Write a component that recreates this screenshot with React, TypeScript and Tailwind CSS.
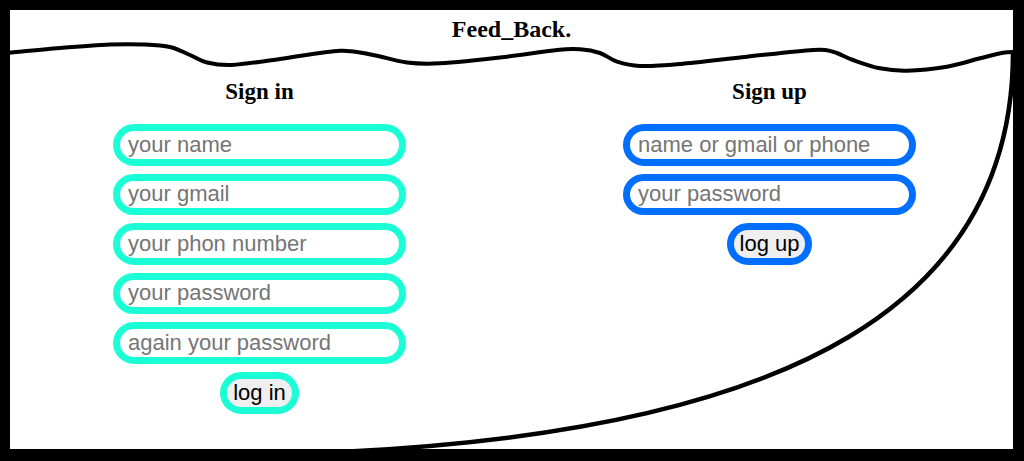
import React from 'react'

// ─── Decorative lines (wave under the title, big sweep on the right) ─────────

type Pt = [number, number]

const wavePts: Pt[] = [
  [10, 52.7], [60, 48], [110, 44.5], [145, 44.5], [170, 47], [190, 55], [207, 62.5],
  [232, 65], [280, 59], [340, 50.7], [373, 55], [407, 62.5], [440, 63.3], [507, 56.7],
  [557, 50], [580, 49.3], [600, 53], [617, 61.7], [640, 66], [680, 64], [747, 56.7],
  [813, 50], [833, 51.7], [853, 60], [880, 68.3], [907, 70.7], [947, 66.7], [980, 58.3],
  [1003, 52.7], [1016, 52],
]

function smoothPath(pts: Pt[]) {
  let d = `M${pts[0][0]} ${pts[0][1]}`
  for (let i = 0; i < pts.length - 1; i++) {
    const p0 = pts[i - 1] ?? pts[i]
    const p1 = pts[i]
    const p2 = pts[i + 1]
    const p3 = pts[i + 2] ?? p2
    const c1x = p1[0] + (p2[0] - p0[0]) / 6
    const c1y = p1[1] + (p2[1] - p0[1]) / 6
    const c2x = p2[0] - (p3[0] - p1[0]) / 6
    const c2y = p2[1] - (p3[1] - p1[1]) / 6
    d += ` C${c1x} ${c1y} ${c2x} ${c2y} ${p2[0]} ${p2[1]}`
  }
  return d
}

function Lines() {
  return (
    <svg
      className="absolute left-0 top-0 pointer-events-none"
      width={1024}
      height={461}
      viewBox="0 0 1024 461"
      fill="none"
    >
      <path d={smoothPath(wavePts)} stroke="#000" strokeWidth={4} strokeLinecap="round" />
      <path d="M1013 52 C1013 300 800 430 340 452" stroke="#000" strokeWidth={4.5} />
    </svg>
  )
}

// ─── Form pieces ──────────────────────────────────────────────────────────────

function Field({ placeholder, tone }: { placeholder: string; tone: 'cyan' | 'blue' }) {
  return (
    <input
      type="text"
      placeholder={placeholder}
      className={`box-border w-[293px] h-[41.5px] rounded-full border-[7px] bg-white pl-[8px] pr-2 text-[22px] leading-[normal] text-black placeholder:text-[#757575] outline-none ${
        tone === 'cyan' ? 'border-[#1affd5]' : 'border-[#006eff]'
      }`}
    />
  )
}

function Pill({ label, tone }: { label: string; tone: 'cyan' | 'blue' }) {
  return (
    <button
      className={`rounded-full border-[7px] bg-[#efefef] px-[6px] py-[1px] text-[22px] leading-[normal] text-black ${
        tone === 'cyan' ? 'border-[#1affd5]' : 'border-[#006eff]'
      }`}
    >
      {label}
    </button>
  )
}

function Column({
  title,
  fields,
  action,
  tone,
}: {
  title: string
  fields: string[]
  action: string
  tone: 'cyan' | 'blue'
}) {
  return (
    <div className="flex w-[293px] flex-col items-center">
      <h3 className="mt-[36px] text-[23px] font-bold leading-[26px] font-['Liberation_Serif',serif]">{title}</h3>
      <div className="mt-[19px] flex flex-col items-center gap-[8px]">
        {fields.map((f) => (
          <Field key={f} placeholder={f} tone={tone} />
        ))}
        <Pill label={action} tone={tone} />
      </div>
    </div>
  )
}

// ─── Page ─────────────────────────────────────────────────────────────────────

export default function App() {
  return (
    <div className="relative h-[461px] w-[1024px] overflow-hidden bg-white font-['Liberation_Sans',Arial,sans-serif]">
      <div className="box-border h-full w-full border-l-[10px] border-t-[10px] border-r-[11px] border-b-[12px] border-black">
        <h2 className="pt-[5px] text-center text-[24px] font-bold leading-[28px] font-['Liberation_Serif',serif]">
          Feed_Back.
        </h2>
        <div className="flex gap-[217px] pl-[103px]">
          <Column
            title="Sign in"
            tone="cyan"
            action="log in"
            fields={['your name', 'your gmail', 'your phon number', 'your password', 'again your password']}
          />
          <Column
            title="Sign up"
            tone="blue"
            action="log up"
            fields={['name or gmail or phone', 'your password']}
          />
        </div>
      </div>
      <Lines />
    </div>
  )
}
